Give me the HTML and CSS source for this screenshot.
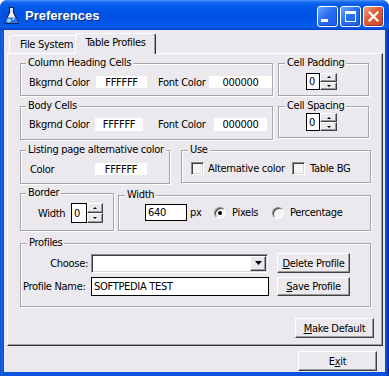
FILE: index.html
```html
<!DOCTYPE html>
<html>
<head>
<meta charset="utf-8">
<title>Preferences</title>
<link rel="stylesheet" href="styles.css">
</head>
<body>
<div class="window">
  <div class="titlebar">
    <svg class="app-icon" width="15" height="19" viewBox="0 0 15 19">
      <path d="M4.5 1.5h6M5.5 1.5v5l-4.5 9v2h13v-2l-4.5-9v-5" fill="#eef3fb" stroke="#12245e" stroke-width="1.2"/>
      <path d="M3.2 11.5h8.6l2 4v1.4H1.2v-1.4z" fill="#2f6fe6"/>
      <circle cx="5" cy="14.5" r="2" fill="#8fe0ff"/>
      <circle cx="9.5" cy="13" r="1" fill="#cfefff"/>
    </svg>
    <span class="title">Preferences</span>
    <div class="tb-buttons">
      <span class="tb-btn tb-min"><span class="glyph-min"></span></span>
      <span class="tb-btn tb-max"><span class="glyph-max"></span></span>
      <span class="tb-btn tb-close">
        <svg width="11" height="11" viewBox="0 0 11 11"><path d="M1.5 1.5l8 8M9.5 1.5l-8 8" stroke="#fff" stroke-width="2.2" stroke-linecap="square"/></svg>
      </span>
    </div>
  </div>

  <div class="client">
    <div class="tabs">
      <div class="tab">File System</div>
      <div class="tab active">Table Profiles</div>
    </div>

    <div class="panel">
      <div class="row">
        <fieldset class="grp g-colhead">
          <legend>Column Heading Cells</legend>
          <div class="colorrow cr-a">
            <span class="lbl la1">Bkgrnd Color</span>
            <span class="sw sa1">FFFFFF</span>
            <span class="lbl la2">Font Color</span>
            <span class="sw sa2">000000</span>
          </div>
        </fieldset>
        <fieldset class="grp g-pad">
          <legend>Cell Padding</legend>
          <div class="spin sp-b">
            <span class="spin-edit">0</span>
            <span class="spin-btns"><span class="sbtn up"></span><span class="sbtn dn"></span></span>
          </div>
        </fieldset>
      </div>

      <div class="row r2">
        <fieldset class="grp g-body">
          <legend>Body Cells</legend>
          <div class="colorrow cr-c">
            <span class="lbl lc1">Bkgrnd Color</span>
            <span class="sw sc1">FFFFFF</span>
            <span class="lbl lc2">Font Color</span>
            <span class="sw sc2">000000</span>
          </div>
        </fieldset>
        <fieldset class="grp g-spc">
          <legend>Cell Spacing</legend>
          <div class="spin sp-d">
            <span class="spin-edit">0</span>
            <span class="spin-btns"><span class="sbtn up"></span><span class="sbtn dn"></span></span>
          </div>
        </fieldset>
      </div>

      <div class="row r3">
        <fieldset class="grp g-list">
          <legend>Listing page alternative color</legend>
          <div class="colorrow cr-e">
            <span class="lbl le1">Color</span>
            <span class="sw se1">FFFFFF</span>
          </div>
        </fieldset>
        <fieldset class="grp g-use">
          <legend>Use</legend>
          <div class="checkrow">
            <span class="cb"></span>
            <span class="cb-lbl cl1">Alternative color</span>
            <span class="cb"></span>
            <span class="cb-lbl cl2">Table BG</span>
          </div>
        </fieldset>
      </div>

      <div class="row r4">
        <fieldset class="grp g-border">
          <legend>Border</legend>
          <div class="spin sp-g">
            <span class="lbl lg1">Width</span>
            <span class="spin-edit">0</span>
            <span class="spin-btns"><span class="sbtn up"></span><span class="sbtn dn"></span></span>
          </div>
        </fieldset>
        <fieldset class="grp g-width">
          <legend>Width</legend>
          <div class="widthrow">
            <span class="edit ed-w">640</span>
            <span class="lbl lpx">px</span>
            <span class="radio on"></span>
            <span class="lbl lpix">Pixels</span>
            <span class="radio"></span>
            <span class="lbl lpct">Percentage</span>
          </div>
        </fieldset>
      </div>

      <div class="row r5">
        <fieldset class="grp g-prof">
          <legend>Profiles</legend>
          <div class="profrow pr1">
            <span class="lbl lchoose">Choose:</span>
            <span class="combo"><span class="combo-btn"><svg width="7" height="4" viewBox="0 0 7 4"><path d="M0 0h7L3.5 4z" fill="#000"/></svg></span></span>
            <span class="btn b-del"><span><u>D</u>elete Profile</span></span>
          </div>
          <div class="profrow pr2">
            <span class="lbl lpname">Profile Name:</span>
            <span class="edit ed-name">SOFTPEDIA TEST</span>
            <span class="btn b-save"><span><u>S</u>ave Profile</span></span>
          </div>
        </fieldset>
      </div>

      <span class="btn b-default"><span><u>M</u>ake Default</span></span>
    </div>

    <span class="btn b-exit"><span>E<u>x</u>it</span></span>
  </div>
</div>
</body>
</html>
```

FILE: styles.css
```css
body {
  margin: 0;
  width: 389px;
  height: 376px;
  overflow: hidden;
  background: #ffffff;
  font-family: "DejaVu Sans Condensed", "Liberation Sans", sans-serif;
  font-size: 11px;
  letter-spacing: -0.3px;
  color: #000;
}

.window {
  width: 389px;
  height: 376px;
  box-sizing: border-box;
  display: flex;
  flex-direction: column;
  background: linear-gradient(90deg, #0a3fc4 0, #1c63e6 1px, #0b54e0 3px, #0b54e0 385px, #0a4ad0 387px, #00259a 389px);
  border-radius: 7px 7px 0 0;
  overflow: hidden;
}

/* ---------- title bar ---------- */
.titlebar {
  height: 30px;
  flex: none;
  display: flex;
  align-items: center;
  border-radius: 7px 7px 0 0;
  background: linear-gradient(180deg, #4a95fb 0, #1a6cf0 2px, #0a5fec 4px, #0157e8 9px, #0052e3 16px, #0458ea 24px, #0a5fee 27px, #0448d8 29px, #0a3cc2 30px);
}
.app-icon {
  margin-left: 4px;
  flex: none;
}
.title {
  margin-left: 6px;
  font-family: "Liberation Sans", sans-serif;
  font-weight: bold;
  font-size: 13px;
  letter-spacing: 0;
  color: #fff;
  text-shadow: 1px 1px 0 #0a2a8a;
  margin-top: 1px;
}
.tb-buttons {
  margin-left: auto;
  margin-right: 5px;
  display: flex;
  gap: 2px;
  margin-top: 3px;
}
.tb-btn {
  box-sizing: border-box;
  width: 21px;
  height: 21px;
  border: 1px solid #fff;
  border-radius: 3px;
  display: flex;
  align-items: center;
  justify-content: center;
  background: linear-gradient(135deg, #6aa6ff 0, #2a6ff2 45%, #1a5ce6 100%);
  box-shadow: inset -1px -1px 0 rgba(0, 30, 120, 0.35);
}
.tb-min {
  align-items: flex-end;
  justify-content: flex-start;
  padding: 0 0 4px 3px;
}
.glyph-min {
  width: 7px;
  height: 3px;
  background: #fff;
}
.glyph-max {
  box-sizing: border-box;
  width: 11px;
  height: 11px;
  border: 1px solid #fff;
  border-top-width: 3px;
}
.tb-close {
  background: linear-gradient(135deg, #f0a080 0, #e0603a 40%, #cc4420 100%);
}

/* ---------- client ---------- */
.client {
  flex: 1;
  margin: 0 4px 4px;
  background: #ebe9ed;
  display: flex;
  flex-direction: column;
}

.tabs {
  display: flex;
  align-items: flex-end;
  height: 20px;
  margin: 3px 0 0 5px;
  flex: none;
}
.tab {
  box-sizing: border-box;
  width: 71px;
  height: 18px;
  border: 1px solid #fff;
  border-bottom: 0;
  border-right-color: #808080;
  border-radius: 3px 3px 0 0;
  display: flex;
  align-items: center;
  justify-content: center;
  background: #ebe9ed;
  padding: 0 0 1px 4px;
  white-space: nowrap;
}
.tab.active {
  width: 81px;
  height: 21px;
  margin-left: -5px;
  margin-bottom: -1px;
  position: relative;
  z-index: 1;
  border-right-color: #303030;
  box-shadow: inset -1px 0 0 #a0a0a0;
  padding: 0 0 3px 0;
}

.panel {
  box-sizing: border-box;
  width: 376px;
  height: 293px;
  margin-left: 3px;
  flex: none;
  border: 1px solid;
  border-color: #fff #303030 #303030 #fff;
  box-shadow: inset -1px -1px 0 #a0a0a0;
  padding: 3px 0 0 12px;
  display: flex;
  flex-direction: column;
}

.row {
  display: flex;
  align-items: flex-start;
}
.r2 { margin-top: 4px; }
.r3 { margin-top: 4px; }
.r4 { margin-top: 3px; }
.r5 { margin-top: 6px; }

/* ---------- group boxes ---------- */
.grp {
  box-sizing: border-box;
  margin: 0;
  padding: 0;
  min-width: 0;
  border: 1px solid #a6a5ab;
  box-shadow: 1px 1px 0 #fff, inset 1px 1px 0 #fff;
  flex: none;
}
.grp legend {
  padding: 0 2px;
  margin-left: 5px;
  line-height: 12px;
  height: 12px;
  white-space: nowrap;
  background: #ebe9ed;
}
.g-colhead { width: 253px; height: 39px; }
.g-pad { width: 91px; height: 39px; margin-left: 5px; }
.g-pad legend, .g-spc legend { margin-left: 6px; }
.g-body { width: 253px; height: 40px; }
.g-spc { width: 91px; height: 38px; margin-left: 5px; }
.g-list { width: 150px; height: 40px; }
.g-use { width: 190px; height: 39px; margin-left: 11px; }
.g-use legend { margin-left: 6px; }
.g-border { width: 94px; height: 44px; }
.g-width { width: 253px; height: 42px; margin-left: 4px; margin-top: 2px; }
.g-width legend { margin-left: 6px; }
.g-prof { width: 351px; height: 70px; }
.g-prof legend { margin-left: 6px; }

.lbl { flex: none; white-space: nowrap; }

.colorrow {
  display: flex;
  align-items: center;
}
.sw {
  flex: none;
  background: #fff;
  display: flex;
  align-items: center;
  justify-content: center;
}
.cr-a { margin: 7px 0 0 8px; height: 12px; }
.cr-a .sw { height: 12px; }
.la1 { width: 67px; }
.sa1 { width: 51px; }
.la2 { width: 51px; margin-left: 11px; }
.sa2 { width: 63px; }

.cr-c { margin: 6px 0 0 8px; height: 13px; }
.cr-c .sw { height: 13px; }
.lc1 { width: 66px; }
.sc1 { width: 48px; }
.lc2 { width: 56px; margin-left: 15px; }
.sc2 { width: 53px; }

.cr-e { margin: 7px 0 0 9px; height: 12px; }
.cr-e .sw { height: 12px; }
.le1 { width: 65px; }
.se1 { width: 52px; }

/* ---------- spin controls ---------- */
.spin {
  display: flex;
  align-items: center;
}
.spin-edit {
  box-sizing: border-box;
  flex: none;
  background: #fff;
  border: 1px solid #000;
  padding-left: 2px;
  display: flex;
  align-items: center;
}
.spin-btns {
  display: flex;
  flex-direction: column;
  flex: none;
}
.sbtn {
  flex: 1;
  box-sizing: border-box;
  border: 1px solid;
  border-color: #fff #404040 #404040 #fff;
  box-shadow: inset -1px -1px 0 #9a9a9a;
  background: #ebe9ed;
  display: flex;
  align-items: center;
  justify-content: center;
}
.sbtn.up::after {
  content: "";
  border-left: 2px solid transparent;
  border-right: 2px solid transparent;
  border-bottom: 2px solid #000;
}
.sbtn.dn::after {
  content: "";
  border-left: 2px solid transparent;
  border-right: 2px solid transparent;
  border-top: 2px solid #000;
}
.sp-b { margin: 4px 0 0 27px; }
.sp-b .spin-edit { width: 14px; height: 17px; }
.sp-b .spin-btns { width: 17px; height: 17px; }
.sp-d { margin: 1px 0 0 27px; }
.sp-d .spin-edit { width: 14px; height: 18px; }
.sp-d .spin-btns { width: 17px; height: 18px; }
.sp-g { margin: 4px 0 0 17px; }
.lg1 { width: 33px; }
.sp-g .spin-edit { width: 16px; height: 20px; }
.sp-g .spin-btns { width: 16px; height: 20px; }

/* ---------- check boxes / radios ---------- */
.checkrow {
  display: flex;
  align-items: center;
  margin: 6px 0 0 9px;
}
.cb {
  box-sizing: border-box;
  flex: none;
  width: 13px;
  height: 13px;
  border: 1px solid;
  border-color: #8a8a8a #fff #fff #8a8a8a;
  box-shadow: inset 1px 1px 0 #404040, inset -1px -1px 0 #d8d6dc;
  background: #f4f4f4;
}
.cb-lbl { flex: none; white-space: nowrap; }
.cl1 { width: 84px; margin-left: 4px; }
.cl2 { margin-left: 5px; }

.widthrow {
  display: flex;
  align-items: center;
  margin: 3px 0 0 26px;
}
.edit {
  box-sizing: border-box;
  flex: none;
  background: #fff;
  border: 1px solid #000;
  display: flex;
  align-items: center;
  padding-left: 2px;
  white-space: nowrap;
}
.ed-w { width: 42px; height: 17px; }
.lpx { margin-left: 3px; width: 11px; }
.radio {
  box-sizing: border-box;
  flex: none;
  width: 12px;
  height: 12px;
  border-radius: 50%;
  border: 1px solid;
  border-color: #8a8a8a #fff #fff #8a8a8a;
  box-shadow: inset 1px 1px 0 #404040;
  background: #f6f6f6;
  display: flex;
  align-items: center;
  justify-content: center;
  margin-left: 13px;
}
.radio.on::after {
  content: "";
  width: 4px;
  height: 4px;
  border-radius: 50%;
  background: #000;
}
.lpix { margin-left: 6px; width: 40px; }
.lpix + .radio { margin-left: 0; }
.lpct { margin-left: 6px; }

/* ---------- profiles ---------- */
.profrow {
  display: flex;
  align-items: center;
}
.pr1 { margin-top: 4px; }
.pr2 { margin-top: 4px; }
.lchoose {
  width: 70px;
  box-sizing: border-box;
  text-align: right;
  padding-right: 3px;
}
.lpname {
  width: 70px;
  box-sizing: border-box;
  padding-left: 2px;
}
.combo {
  box-sizing: border-box;
  flex: none;
  width: 177px;
  height: 19px;
  border: 1px solid;
  border-color: #8a8a8a #fff #fff #8a8a8a;
  box-shadow: inset 1px 1px 0 #404040, inset -1px -1px 0 #d8d6dc;
  background: #fff;
  display: flex;
  justify-content: flex-end;
  align-items: center;
  padding-right: 1px;
}
.combo-btn {
  box-sizing: border-box;
  width: 16px;
  height: 15px;
  border: 1px solid;
  border-color: #fff #404040 #404040 #fff;
  box-shadow: inset -1px -1px 0 #9a9a9a;
  background: #ebe9ed;
  display: flex;
  align-items: center;
  justify-content: center;
}
.ed-name { width: 178px; height: 19px; }

/* ---------- buttons ---------- */
.btn {
  box-sizing: border-box;
  flex: none;
  border: 1px solid;
  border-color: #fff #404040 #404040 #fff;
  box-shadow: inset -1px -1px 0 #9a9a9a;
  background: #ebe9ed;
  display: flex;
  align-items: center;
  justify-content: center;
  white-space: nowrap;
}
.b-del { width: 73px; height: 20px; margin-left: 9px; }
.b-save { width: 73px; height: 19px; margin-left: 8px; }
.b-default {
  width: 79px;
  height: 20px;
  margin-top: 11px;
  align-self: flex-end;
  margin-right: 8px;
}
.b-exit {
  width: 79px;
  height: 20px;
  margin-top: 5px;
  align-self: flex-end;
  margin-right: 8px;
}
```
